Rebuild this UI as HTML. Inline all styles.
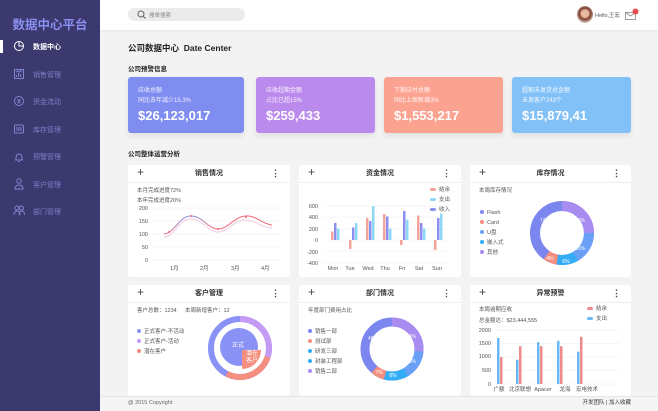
<!DOCTYPE html>
<html><head><meta charset="utf-8"><style>
*{margin:0;padding:0;box-sizing:border-box}
body{width:658px;height:411px;overflow:hidden;background:#f3f3f4;font-family:"Liberation Sans","Noto Sans CJK SC",sans-serif;position:relative}
.side{position:absolute;left:0;top:0;width:100px;height:411px;background:#3c396f}
.abs{position:absolute}
.hdr{position:absolute;left:100px;top:0;width:558px;height:30px;background:#fff;box-shadow:0 1px 2px rgba(0,0,0,.06)}
.card{position:absolute;top:77px;height:56px;border-radius:3px;color:#fff;box-shadow:0 3px 6px rgba(0,0,0,.08)}
.card .a{position:absolute;left:10px;top:8px;font-size:6px;opacity:.9}
.card .b{position:absolute;left:10px;top:18px;font-size:6px;opacity:.9}
.card .c{position:absolute;left:10px;top:31px;font-size:13px;font-weight:bold}
.pan{position:absolute;background:#fff;border-radius:3px}
.pan .h{height:18px;border-bottom:1px solid #eee;font-size:7px;font-weight:bold;color:#333;text-align:center;line-height:17px;position:relative}
.pan .h:before{content:"+";position:absolute;left:9px;top:-1px;font-size:12px;font-weight:normal;color:#444}
.pan .h:after{content:"⋮";position:absolute;right:10px;top:0;font-size:9px;color:#444}
.foot{position:absolute;left:100px;top:396px;width:558px;height:15px;background:#f5f5f5;border-top:1px solid #e6e6e6;font-size:5.5px;color:#666}
.foot span{line-height:7px}
</style></head><body>
<div class="side">
<div class="abs" style="left:0;width:100px;top:14px;text-align:center;color:#8b8ff0;font-size:12.5px;font-weight:bold">数据中心平台</div>
<div class="abs" style="left:0;top:40px;width:3px;height:13px;background:#fff"></div>
<svg class="abs" style="left:0;top:0" width="100" height="230" fill="none" stroke="#8084d0" stroke-width="1">
<circle cx="19" cy="46" r="4.5" stroke="#fff"/><path d="M19 41.5V46H23.5" stroke="#fff"/>
<rect x="14.5" y="69.5" width="9" height="9"/><path d="M16.5 77v-2M18.5 77v-4M20.5 77v-3M16 72l2-1 2 1 2-2"/>
<circle cx="19" cy="101" r="4.5"/><path d="M17.5 99l1.5 2 1.5-2M19 101v2.5M17.5 102h3"/>
<rect x="14.5" y="125" width="9" height="8" rx="1"/><path d="M16 128h6M16 130h6"/>
<path d="M15 160h8M16 160c0-3 0-6 3-6s3 3 3 6M18 161.5h2"/>
<circle cx="19" cy="181" r="2.2"/><path d="M15 189c0-3 2-4 4-4s4 1 4 4z"/>
<circle cx="17" cy="208" r="2"/><circle cx="21.5" cy="208" r="2"/><path d="M14 215c0-3 1.5-4 3-4s3 1 3 4M19 215c0-3 1.5-4 3-4s2.5 1 2.5 4"/>
</svg>
<div class="abs" style="left:33px;top:42px;font-size:7px;color:#fff;font-weight:bold">数据中心</div>
<div class="abs" style="left:33px;top:70px;font-size:7px;color:#7c7fc8">销售管理</div>
<div class="abs" style="left:33px;top:97px;font-size:7px;color:#7c7fc8">资金流动</div>
<div class="abs" style="left:33px;top:125px;font-size:7px;color:#7c7fc8">库存管理</div>
<div class="abs" style="left:33px;top:152px;font-size:7px;color:#7c7fc8">预警管理</div>
<div class="abs" style="left:33px;top:180px;font-size:7px;color:#7c7fc8">客户管理</div>
<div class="abs" style="left:33px;top:207px;font-size:7px;color:#7c7fc8">部门管理</div>
</div>
<div class="hdr">
<div class="abs" style="left:28px;top:8px;width:117px;height:13px;border-radius:7px;background:#ebebeb"></div>
<svg class="abs" style="left:37px;top:10px" width="10" height="10" fill="none" stroke="#666" stroke-width="1"><circle cx="4" cy="4" r="3"/><path d="M6.2 6.2L8.5 8.5"/></svg>
<div class="abs" style="left:49px;top:11px;font-size:5.5px;color:#888">搜单搜索</div>
<div class="abs" style="left:477px;top:6px;width:16px;height:17px;border-radius:50%;background:radial-gradient(circle at 50% 45%,#e8b8a0 0 30%,#7a3a28 45%,#d9c8c0 75%)"></div>
<div class="abs" style="left:495px;top:11px;font-size:5.5px;color:#555">Hello,王宏</div>
<svg class="abs" style="left:524px;top:8px" width="16" height="14" fill="none" stroke="#888" stroke-width=".8"><rect x="1.5" y="4.5" width="10" height="7"/><path d="M1.5 4.5l5 3.5 5-3.5"/><circle cx="11.5" cy="3.5" r="3" fill="#e94b4b" stroke="none"/></svg>
</div>
<div class="abs" style="left:128px;top:42px;font-size:8.5px;font-weight:bold;color:#222">公司数据中心&nbsp; Date Center</div>
<div class="abs" style="left:128px;top:63px;font-size:6.5px;font-weight:bold;color:#222">公司预警信息</div>
<div class="card" style="left:128px;width:116px;background:#7f8cf0"><div class="a">应收总额</div><div class="b">同比去年减少15.3%</div><div class="c">$26,123,017</div></div>
<div class="card" style="left:256px;width:119px;background:#bb8aed"><div class="a">应收超期金额</div><div class="b">占比已超15%</div><div class="c">$259,433</div></div>
<div class="card" style="left:384px;width:119px;background:#fca290"><div class="a">下期应付总额</div><div class="b">同比上周新增3%</div><div class="c">$1,553,217</div></div>
<div class="card" style="left:512px;width:119px;background:#82c1f7"><div class="a">超期未发货总金额</div><div class="b">未发客户243个</div><div class="c">$15,879,41</div></div>
<div class="abs" style="left:128px;top:148px;font-size:6.5px;font-weight:bold;color:#222">公司整体运营分析</div>
<div class="pan" style="left:128px;top:165px;width:162px;height:112px"><div class="h">销售情况</div></div>
<div class="pan" style="left:299px;top:165px;width:162px;height:112px"><div class="h">资金情况</div></div>
<div class="pan" style="left:470px;top:165px;width:161px;height:112px"><div class="h">库存情况</div></div>
<div class="pan" style="left:128px;top:285px;width:162px;height:111px"><div class="h">客户管理</div></div>
<div class="pan" style="left:299px;top:285px;width:162px;height:111px"><div class="h">部门情况</div></div>
<div class="pan" style="left:470px;top:285px;width:161px;height:111px"><div class="h">异常预警</div></div>
<svg class="abs" style="left:0;top:0" width="658" height="411" font-family="Liberation Sans,Noto Sans CJK SC,sans-serif" font-size="5.5" fill="#555">
<text x="137" y="192">本月完成进度72%</text><text x="137" y="202">本年完成进度20%</text>
<g stroke="#eee" stroke-width=".5"><path d="M152 208H282M152 221H282M152 234H282M152 247H282M152 260H282"/></g>
<g text-anchor="end"><text x="148" y="210">200</text><text x="148" y="223">150</text><text x="148" y="236">100</text><text x="148" y="249">50</text><text x="148" y="262">0</text></g>
<text x="170" y="270">1月</text><text x="200" y="270">2月</text><text x="231" y="270">3月</text><text x="261" y="270">4月</text>
<defs><linearGradient id="lg" x1="0" x2="1"><stop offset="0" stop-color="#f06a7a"/><stop offset=".25" stop-color="#7a9af0"/><stop offset=".45" stop-color="#f06a7a"/></linearGradient></defs>
<path d="M164 235C175 234 178 218 190 217S208 230 218 230 234 218 245 218 262 226 272 226" fill="none" stroke="#f4d8e8" stroke-width="1.5" transform="translate(0,2)"/>
<path d="M164 234C175 233 178 217 190 216S208 229 218 229 234 217 245 216 262 224 272 225" fill="none" stroke="url(#lg)" stroke-width="1"/>
<g fill="#f06a7a"><circle cx="169" cy="232" r="1"/><circle cx="191" cy="216" r="1"/><circle cx="218" cy="229" r="1"/><circle cx="246" cy="217" r="1"/></g>
<g text-anchor="end"><text x="318" y="208">600</text><text x="318" y="219">400</text><text x="318" y="231">200</text><text x="318" y="242">0</text><text x="318" y="254">-200</text><text x="318" y="265">-400</text></g>
<g stroke="#eee" stroke-width=".5"><path d="M324 206H450M324 217H450M324 229H450M324 240H450M324 251H450M324 263H450"/></g>
<rect x="430" y="188" width="6" height="3" rx="1.5" fill="#f4a39a"/><text x="439" y="191">结余</text>
<rect x="430" y="198" width="6" height="3" rx="1.5" fill="#8dd8f5"/><text x="439" y="201">支出</text>
<rect x="430" y="208" width="6" height="3" rx="1.5" fill="#8a8ff0"/><text x="439" y="211">收入</text>
<g fill="#f4a39a"><rect x="331" y="231.5" width="2.5" height="8.5"/><rect x="349" y="240" width="2.5" height="9"/><rect x="366" y="218" width="2.5" height="22"/><rect x="383" y="214" width="2.5" height="26"/><rect x="400" y="240" width="2.5" height="5"/><rect x="417" y="215.5" width="2.5" height="24.5"/><rect x="434" y="240" width="2.5" height="10"/></g>
<g fill="#8a8ff0"><rect x="334" y="223" width="2.5" height="17"/><rect x="352" y="227.5" width="2.5" height="12.5"/><rect x="369" y="221" width="2.5" height="19"/><rect x="386" y="216.5" width="2.5" height="23.5"/><rect x="403" y="211" width="2.5" height="29"/><rect x="420" y="223" width="2.5" height="17"/><rect x="437" y="218" width="2.5" height="22"/></g>
<g fill="#8dd8f5"><rect x="337" y="228.5" width="2.5" height="11.5"/><rect x="355" y="223" width="2.5" height="17"/><rect x="372" y="206" width="2.5" height="34"/><rect x="389" y="228.5" width="2.5" height="11.5"/><rect x="406" y="219.5" width="2.5" height="20.5"/><rect x="423" y="228.5" width="2.5" height="11.5"/><rect x="440" y="213.5" width="2.5" height="26.5"/></g>
<g text-anchor="middle"><text x="333" y="270">Mon</text><text x="350" y="270">Tue</text><text x="368" y="270">Wed</text><text x="385" y="270">Thu</text><text x="402" y="270">Fri</text><text x="419" y="270">Sat</text><text x="437" y="270">Sun</text></g>
<text x="479" y="192">本周库存情况</text>
<g><circle cx="482" cy="212" r="2" fill="#7b86ef"/><text x="487" y="214">Flash</text>
<circle cx="482" cy="222" r="2" fill="#f48e7e"/><text x="487" y="224">Card</text>
<circle cx="482" cy="232" r="2" fill="#6aa0f5"/><text x="487" y="234">U盘</text>
<circle cx="482" cy="242" r="2" fill="#33aef5"/><text x="487" y="244">嵌入式</text>
<circle cx="482" cy="252" r="2" fill="#a98cf0"/><text x="487" y="254">其他</text></g>
<g fill="none" stroke-width="10" transform="translate(562 233)">
<circle r="27" stroke="#7b86ef"/>
<circle r="27" stroke="#a98cf0" stroke-dasharray="42.4 200" transform="rotate(-90)"/>
<circle r="27" stroke="#6aa0f5" stroke-dasharray="28.3 200" transform="rotate(0)"/>
<circle r="27" stroke="#33aef5" stroke-dasharray="18.8 200" transform="rotate(60)"/>
<circle r="27" stroke="#f48e7e" stroke-dasharray="11.8 200" transform="rotate(100)"/>
</g>
<g fill="#fff" font-size="5" text-anchor="middle"><text x="545" y="222">74%</text><text x="580" y="222">10%</text><text x="580" y="250">10%</text><text x="566" y="263">6%</text><text x="550" y="260">4%</text></g>
<text x="137" y="312">客户总数：1234</text><text x="185" y="312">本周新增客户：12</text>
<circle cx="139" cy="331" r="2" fill="#8a92f5"/><text x="144" y="333">正式客户-不活动</text>
<circle cx="139" cy="341" r="2" fill="#c59af5"/><text x="144" y="343">正式客户-活动</text>
<circle cx="139" cy="351" r="2" fill="#f48e7e"/><text x="144" y="353">潜在客户</text>
<g fill="none" stroke-width="6" transform="translate(240 348)">
<circle r="29" stroke="#8a92f5"/>
<circle r="29" stroke="#c59af5" stroke-dasharray="55 200" transform="rotate(-90)"/>
<circle r="29" stroke="#f48e7e" stroke-dasharray="50 200" transform="rotate(18)"/>
</g>
<circle cx="239" cy="347" r="19" fill="#8a92f5"/>
<path d="M242 350V369A19 19 0 0 0 261 350Z" fill="#f48e7e"/>
<g fill="#fff" font-size="6"><text x="232" y="347">正式</text><text x="246" y="355">潜在</text><text x="246" y="362">客户</text></g>
<text x="308" y="312">年度部门费用占比</text>
<circle cx="310" cy="331" r="2" fill="#7b86ef"/><text x="315" y="333">销售一部</text>
<circle cx="310" cy="341" r="2" fill="#f48e7e"/><text x="315" y="343">测试部</text>
<circle cx="310" cy="351" r="2" fill="#33aef5"/><text x="315" y="353">研发三部</text>
<circle cx="310" cy="361" r="2" fill="#33aef5"/><text x="315" y="363">封装工程部</text>
<circle cx="310" cy="371" r="2" fill="#a98cf0"/><text x="315" y="373">销售二部</text>
<g fill="none" stroke-width="9" transform="translate(392 349)">
<circle r="27" stroke="#7b86ef"/>
<circle r="27" stroke="#a98cf0" stroke-dasharray="45 200" transform="rotate(-90)"/>
<circle r="27" stroke="#6aa0f5" stroke-dasharray="26 200" transform="rotate(5)"/>
<circle r="27" stroke="#33aef5" stroke-dasharray="21 200" transform="rotate(60)"/>
<circle r="27" stroke="#f48e7e" stroke-dasharray="12 200" transform="rotate(105)"/>
</g>
<g fill="#fff" font-size="5" text-anchor="middle"><text x="373" y="340">48%</text><text x="411" y="338">24%</text><text x="411" y="363">13%</text><text x="393" y="377">8%</text><text x="379" y="374">7%</text></g>
<text x="479" y="311">本周逾期应收</text><text x="479" y="322">总金额达：$23,444,555</text>
<rect x="587" y="307" width="6" height="3" rx="1.5" fill="#f08a8a"/><text x="596" y="310">结余</text>
<rect x="587" y="317" width="6" height="3" rx="1.5" fill="#6ab8f5"/><text x="596" y="320">支出</text>
<g text-anchor="end"><text x="491" y="332">2000</text><text x="491" y="345">1500</text><text x="491" y="358">1000</text><text x="491" y="372">500</text><text x="491" y="386">0</text></g>
<g stroke="#eee" stroke-width=".5"><path d="M495 330H620M495 343.5H620M495 357H620M495 370.5H620M495 384H620"/></g>
<g fill="#6ab8f5"><rect x="497" y="338" width="2.5" height="46"/><rect x="516" y="359.7" width="2.5" height="24.3"/><rect x="537" y="342.1" width="2.5" height="41.9"/><rect x="557" y="340.8" width="2.5" height="43.2"/><rect x="577" y="351.6" width="2.5" height="32.4"/></g>
<g fill="#f08a8a"><rect x="500" y="357" width="2.5" height="27"/><rect x="519" y="346.2" width="2.5" height="37.8"/><rect x="540" y="346.2" width="2.5" height="37.8"/><rect x="560" y="346.2" width="2.5" height="37.8"/><rect x="580" y="336.8" width="2.5" height="47.2"/></g>
<g text-anchor="middle" font-size="5.5"><text x="499" y="391">广额</text><text x="520" y="391">北京联想</text><text x="543" y="391">Apacer</text><text x="565" y="391">龙海</text><text x="587" y="391">宏电技术</text></g>
</svg>
<div class="foot"><span class="abs" style="left:28px;top:3px">@ 2015 Copyright</span><span class="abs" style="right:27px;top:3px;color:#333">开发团队 | 加入收藏</span></div>
</body></html>
